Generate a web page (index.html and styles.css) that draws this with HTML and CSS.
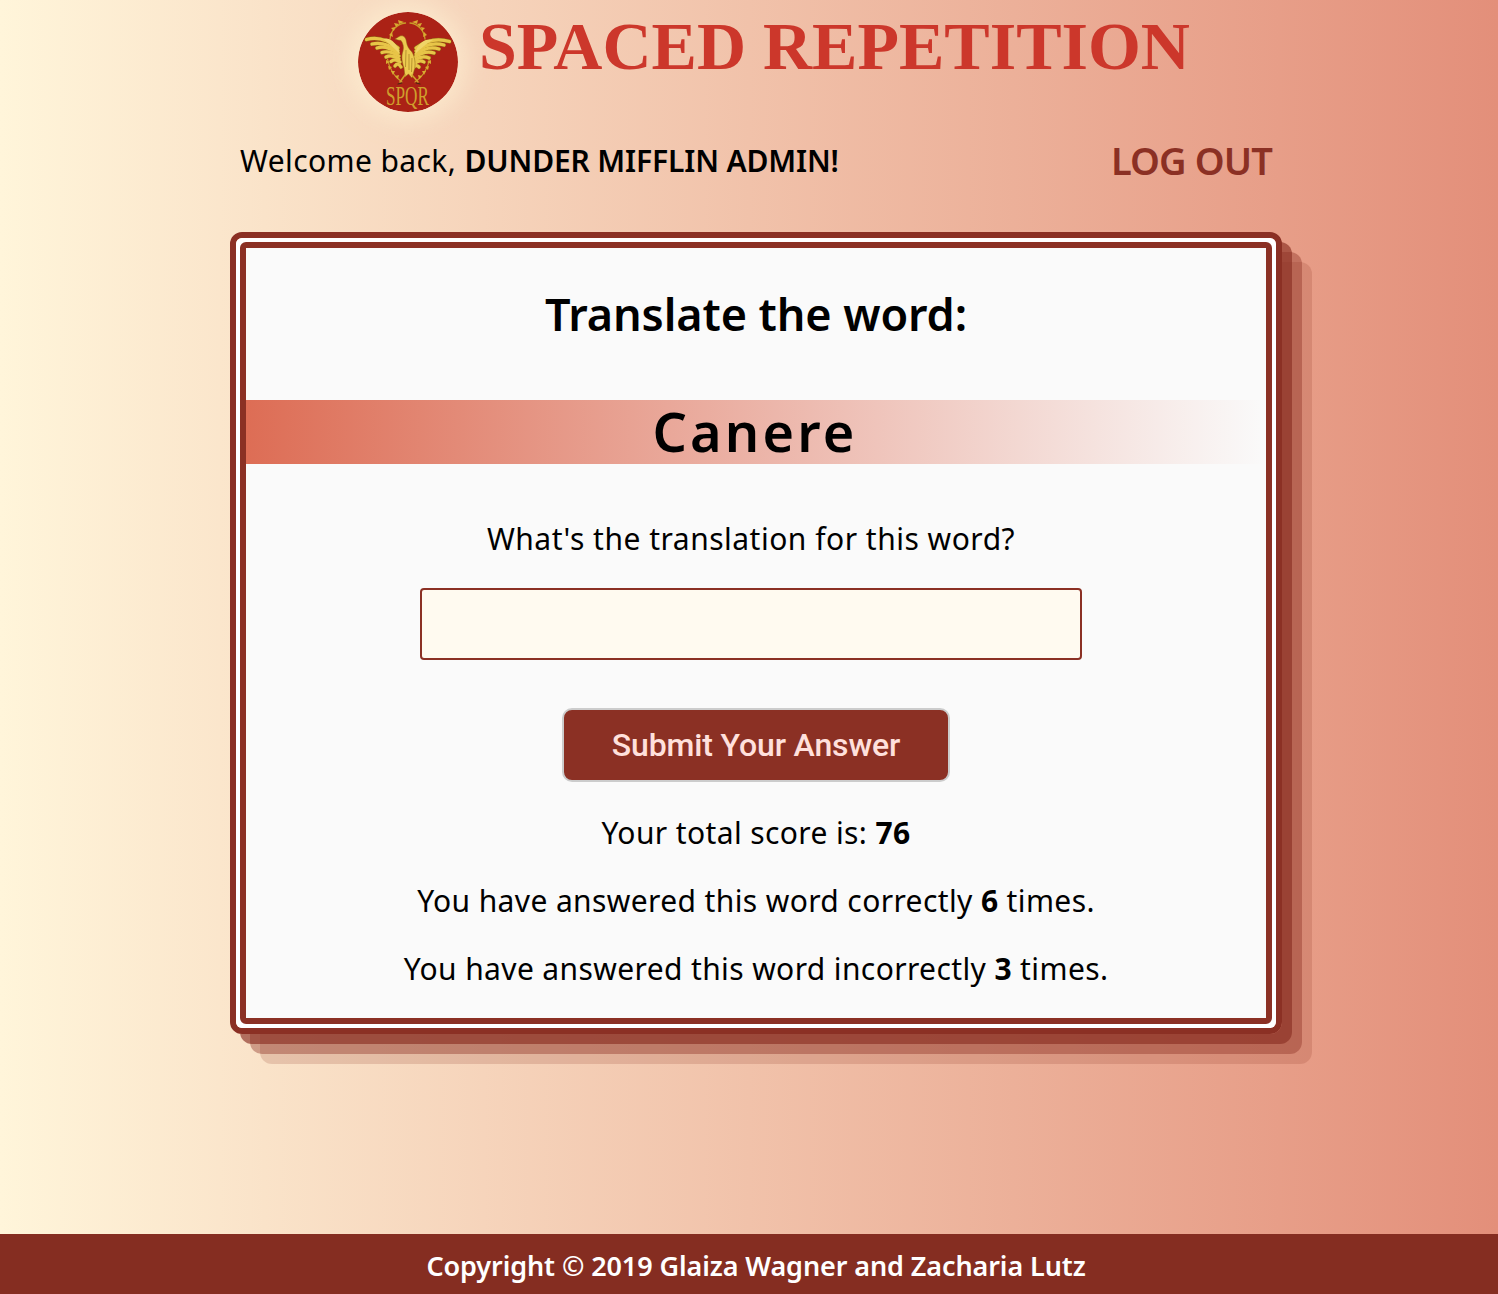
FILE: index.html
```html
<!DOCTYPE html>
<html lang="en">
<head>
<meta charset="utf-8">
<title>Spaced Repetition</title>
<link rel="stylesheet" href="styles.css">
</head>
<body>
<div class="page">
  <div class="content">
    <header class="brand">
      <svg class="logo" viewBox="0 0 100 100" aria-hidden="true">
        <defs>
          <g id="feathers">
            <path d="M40 36 Q24 23 8.500 27.500"/>
            <path d="M40 38.500 Q26 29 14 32"/>
            <path d="M40 41 Q28 33 19 36"/>
            <path d="M41 44 Q31 38 24 40.500"/>
            <path d="M41 47 Q34 42 28 45"/>
            <path d="M42 50 Q37 46 33 49.500"/>
            <path d="M43 55 Q40 50 37 54"/>
            <path d="M58 36 Q74 24 91.500 29.500"/>
            <path d="M58 39 Q72 29 86 33"/>
            <path d="M58 42 Q70 33 81 37"/>
            <path d="M57 45 Q67 38 76 41"/>
            <path d="M57 48 Q64 43 71 46"/>
            <path d="M56 52 Q61 47 66 50"/>
            <path d="M55 56 Q58 52 61 55"/>
          </g>
        </defs>
        <circle cx="50" cy="50" r="50" fill="#ab2216"/>
        <g fill="none" stroke="#c99a28" stroke-width="1.300" stroke-linecap="round">
          <path d="M47.500 11 C39 12 33 18 32 27"/>
          <path d="M52 11 C60 12 66 18 67 27"/>
          <path d="M29 45 C31 56 36 65 44 70"/>
          <path d="M72 45 C70 56 65 65 57 70"/>
        </g>
        <g fill="#d8ab31">
          <path d="M46 10l-6-2 1 4zM41 12l-5-1 2 4zM37 15l-4 1 3 3zM34 20l-3 3 4 2z"/>
          <path d="M54 10l6-2-1 4zM59 12l5-1-2 4zM63 15l4 1-3 3zM66 20l3 3-4 2z"/>
          <path d="M28 48l4 2-4 2zM30 54l4 1-3 3zM33 59l4 0-2 4zM37 64l4-1-1 4z"/>
          <path d="M73 48l-4 2 4 2zM71 54l-4 1 3 3zM68 59l-4 0 2 4zM64 64l-4-1 1 4z"/>
        </g>
        <use href="#feathers" fill="none" stroke="#8f6414" stroke-width="4.200" stroke-linecap="round"/>
        <use href="#feathers" fill="none" stroke="#e8c548" stroke-width="3.200" stroke-linecap="round"/>
        <path fill="#f0d468" d="M25 27 C31 25 36 29 40 36 L42 42 C36 36 30 30 25 27Z"/>
        <path fill="#f0d468" d="M75 28 C69 26 63 29 59 36 L57 42 C63 36 69 31 75 28Z"/>
        <path fill="#ecca50" stroke="#8f6414" stroke-width=".5" d="M37 27 L42 24 C46 23 48 26 48.500 30 C49 34 51 37 54 40 C57 45 58 53 56 59 L54 66 L50.500 62 L47 65 L46 56 C44 50 43 44 45 39 C46 35 45 31 43 28.500 L40 28Z"/>
        <g fill="none" stroke="#96701a" stroke-width=".6">
          <path d="M48 38 L47.500 55 M51 42 L51 58 M54 46 L53.500 60"/>
        </g>
        <path fill="none" stroke="#cfa02c" stroke-width="1.600" stroke-linecap="round" d="M47 63 L42 70 M54 63 L60 70"/>
        <path fill="none" stroke="#3a2a10" stroke-width=".9" stroke-linecap="round" d="M40 72 L44 71 M58 71 L62 72"/>
        <text class="logo-text" x="49.500" y="93" textLength="43" lengthAdjust="spacingAndGlyphs" text-anchor="middle">SPQR</text>
      </svg>
      <h1 class="title">SPACED REPETITION</h1>
    </header>
    <nav class="userbar">
      <p class="welcome">Welcome back, <strong>DUNDER MIFFLIN ADMIN!</strong></p>
      <a class="logout" href="#">LOG OUT</a>
    </nav>
    <main class="card">
      <div class="card-gap">
        <div class="card-inner">
          <h2 class="prompt">Translate the word:</h2>
          <div class="word-band"><span class="word">Canere</span></div>
          <form class="answer">
            <label class="question" for="guess">What's the translation for this word?</label>
            <input class="guess" id="guess" type="text">
            <button class="submit" type="button">Submit Your Answer</button>
          </form>
          <div class="stats">
            <p>Your total score is: <strong>76</strong></p>
            <p>You have answered this word correctly <strong>6</strong> times.</p>
            <p>You have answered this word incorrectly <strong>3</strong> times.</p>
          </div>
        </div>
      </div>
    </main>
  </div>
  <footer class="footer">Copyright © 2019 Glaiza Wagner and Zacharia Lutz</footer>
</div>
</body>
</html>
```
FILE: styles.css
```css
* { box-sizing: border-box; }
html, body { margin: 0; padding: 0; }
body {
  font-family: "Noto Sans", "Open Sans", sans-serif;
  color: #000;
}
.page {
  min-height: 1294px;
  display: flex;
  flex-direction: column;
  background: linear-gradient(90deg, #fff5da 0%, #e38f7a 100%);
}
.content {
  flex: 1;
  padding-left: 14px;
  display: flex;
  flex-direction: column;
  align-items: center;
}
.brand {
  height: 112px;
  padding-top: 12px;
  margin-left: 36px;
  display: flex;
  align-items: flex-start;
  gap: 21px;
}
.logo {
  flex: none;
  width: 100px;
  height: 100px;
  border-radius: 50%;
  box-shadow: 0 0 24px 8px rgba(255, 245, 215, .55);
}
.logo-text {
  font-family: "Liberation Serif", serif;
  font-size: 27px;
  fill: #cf9f2c;
}
.title {
  margin: -4px 0 0;
  font-family: "Liberation Serif", serif;
  font-size: 68px;
  line-height: 76px;
  font-weight: 700;
  color: #cc372b;
  white-space: nowrap;
}
.userbar {
  width: 1052px;
  height: 120px;
  padding: 26px 10px 0;
  display: flex;
  justify-content: space-between;
  align-items: flex-start;
}
.welcome {
  margin: 0;
  font-size: 30px;
  line-height: 46px;
  letter-spacing: .4px;
}
.welcome strong {
  font-weight: 600;
  letter-spacing: -.15px;
}
.logout {
  font-size: 38px;
  line-height: 44px;
  font-weight: 600;
  letter-spacing: -.9px;
  color: #8b3024;
  text-decoration: none;
}
.card {
  width: 1052px;
  height: 802px;
  border: 6px solid #8b3024;
  border-radius: 12px;
  box-shadow:
    10px 10px 0 rgba(139, 48, 36, .65),
    20px 20px 0 rgba(139, 48, 36, .4),
    30px 30px 0 rgba(139, 48, 36, .18);
}
.card-gap {
  height: 100%;
  padding: 4px;
  background: #fff;
  border-radius: 6px;
}
.card-inner {
  height: 100%;
  border: 6px solid #8b3024;
  border-radius: 6px;
  background: #fafafa;
  display: flex;
  flex-direction: column;
  align-items: center;
}
.prompt {
  margin: 0;
  padding-top: 35px;
  height: 152px;
  font-size: 45px;
  line-height: 62px;
  font-weight: 600;
  letter-spacing: -.1px;
}
.word-band {
  width: 100%;
  height: 64px;
  display: flex;
  justify-content: center;
  background: linear-gradient(90deg, #dd6d55 0%, rgba(221, 109, 85, 0) 100%);
}
.word {
  font-size: 54px;
  line-height: 62px;
  font-weight: 600;
  letter-spacing: 3.200px;
  margin-right: 2px;
}
.answer {
  margin-top: 50px;
  display: flex;
  flex-direction: column;
  align-items: center;
}
.question {
  font-size: 30px;
  line-height: 50px;
  letter-spacing: .5px;
  margin-right: 10px;
}
.guess {
  margin: 24px 10px 0 0;
  width: 662px;
  height: 72px;
  border: 2px solid #8b3024;
  border-radius: 4px;
  background: #fffaf0;
}
.submit {
  margin-top: 48px;
  width: 388px;
  height: 74px;
  border: 2px solid #ccc;
  border-radius: 10px;
  background: #8b3024;
  color: #ffe0dc;
  font-family: Roboto, sans-serif;
  font-size: 32px;
  font-weight: 500;
  letter-spacing: -.15px;
}
.stats {
  margin-top: 26px;
  display: flex;
  flex-direction: column;
  gap: 18px;
  text-align: center;
  font-size: 30px;
  line-height: 50px;
  letter-spacing: .38px;
}
.stats p { margin: 0; }
.stats strong { font-weight: 700; }
.footer {
  width: 100%;
  height: 60px;
  padding-left: 14px;
  background: #852d21;
  color: #fff;
  text-align: center;
  font-size: 27px;
  line-height: 63px;
  font-weight: 600;
  letter-spacing: -.1px;
}
```
